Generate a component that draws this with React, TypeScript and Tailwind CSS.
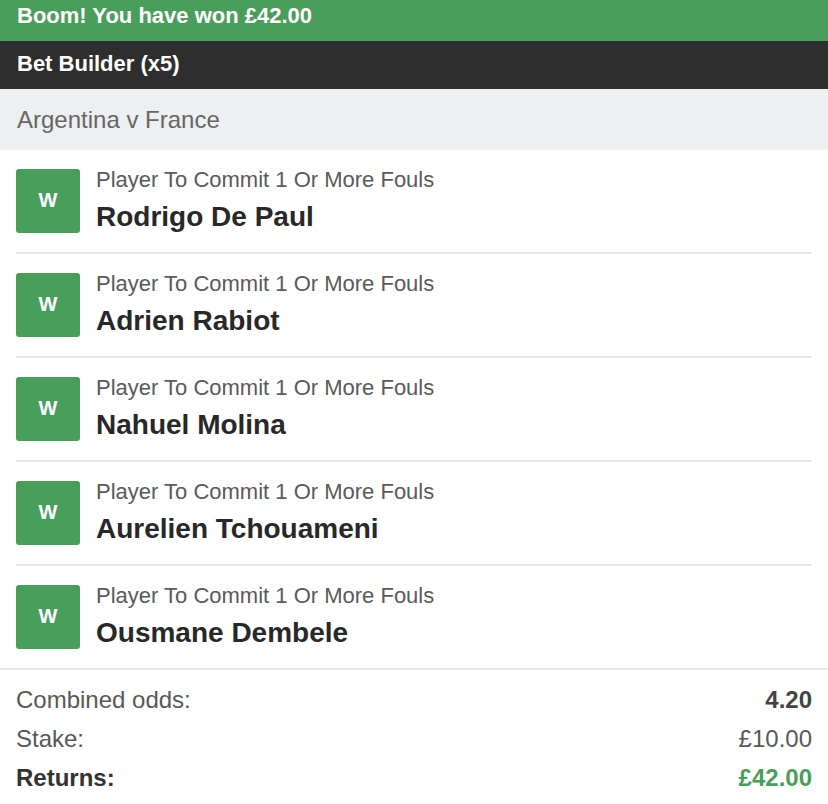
import React from 'react';

const selections = [
  { market: 'Player To Commit 1 Or More Fouls', name: 'Rodrigo De Paul' },
  { market: 'Player To Commit 1 Or More Fouls', name: 'Adrien Rabiot' },
  { market: 'Player To Commit 1 Or More Fouls', name: 'Nahuel Molina' },
  { market: 'Player To Commit 1 Or More Fouls', name: 'Aurelien Tchouameni' },
  { market: 'Player To Commit 1 Or More Fouls', name: 'Ousmane Dembele' },
];

const App: React.FC = () => {
  return (
    <div className="w-[828px] h-[804px] overflow-hidden bg-white font-['Liberation_Sans',Arial,sans-serif]">
      <div className="h-[41px] bg-[#4a9e5c] px-[17px] pt-[4px]">
        <span className="block text-[22px] leading-[24px] font-bold text-white">Boom! You have won £42.00</span>
      </div>

      <div className="h-[48px] bg-[#2e2e2e] px-[17px] flex items-center">
        <span className="block text-[22px] leading-[24px] font-bold text-white -mt-[2px]">Bet Builder (x5)</span>
      </div>

      <div className="h-[61px] bg-[#eeeff1] px-[17px] flex items-center">
        <span className="text-[24px] leading-[28px] text-[#666666]">Argentina v France</span>
      </div>

      <div className="px-4">
        {selections.map((s, i) => (
          <div
            key={s.name}
            className={`flex items-start gap-4 py-[19px] ${i < selections.length - 1 ? 'border-b-2 border-[#e6e7e9]' : ''}`}
          >
            <div className="w-16 h-16 shrink-0 rounded-[3px] bg-[#4a9e5c] flex items-center justify-center pb-[3px]">
              <span className="text-[20px] font-bold text-white leading-none">W</span>
            </div>
            <div className="-mt-[1px]">
              <div className="text-[22px] leading-[24px] text-[#5a5a5a]">{s.market}</div>
              <div className="mt-[9px] text-[28px] leading-[32px] font-bold text-[#282828]">{s.name}</div>
            </div>
          </div>
        ))}
      </div>

      <div className="border-t-2 border-[#e6e7e9] px-[16px] pt-[10px] text-[24px] leading-[39px]">
        <div className="flex justify-between">
          <span className="text-[#585858]">Combined odds:</span>
          <span className="font-bold text-[#444444]">4.20</span>
        </div>
        <div className="flex justify-between">
          <span className="text-[#585858]">Stake:</span>
          <span className="text-[#585858]">£10.00</span>
        </div>
        <div className="flex justify-between">
          <span className="font-bold text-[#333333]">Returns:</span>
          <span className="font-bold text-[#4a9e5c]">£42.00</span>
        </div>
      </div>
    </div>
  );
};

export default App;
